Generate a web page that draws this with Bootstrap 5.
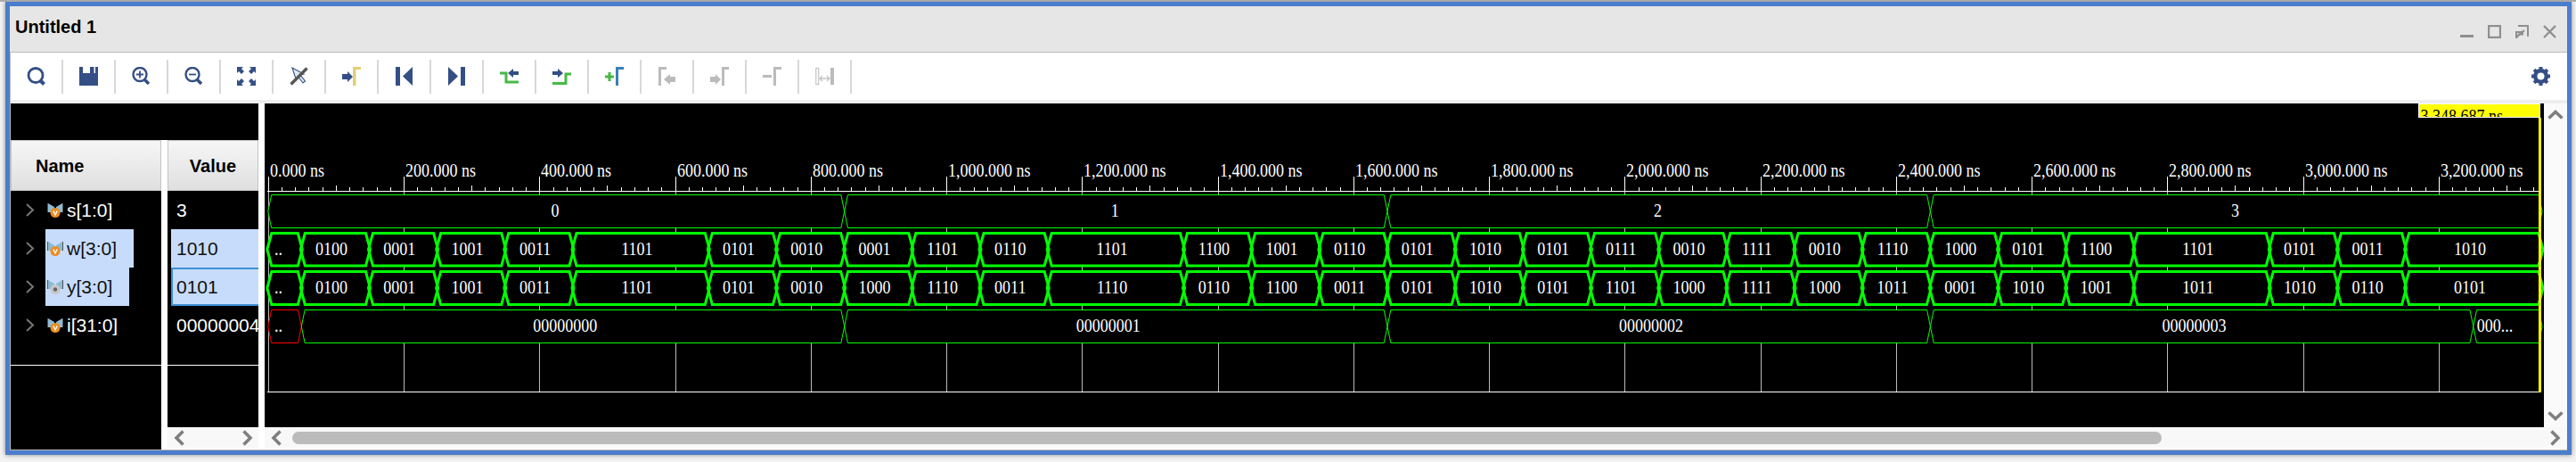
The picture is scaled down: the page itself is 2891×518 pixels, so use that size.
<!DOCTYPE html>
<html lang="en">
<head>
    <meta charset="UTF-8">
    <title>Untitled 1</title>
    <link href="https://cdn.jsdelivr.net/npm/bootstrap@5.3.0/dist/css/bootstrap.min.css" rel="stylesheet">
    <style>
        html, body {
            height: 518px;
            overflow: hidden;
        }
        body {
            background-color: #f2f2f2;
            border-top: 2px solid #a9a9a9;
            font-family: "Liberation Sans", Arial, sans-serif;
            color: #000;
        }
        .win-frame {
            height: 508px;
            margin: 0 5px 0 6px;
            border: 5px solid #4a7dcc;
            background-color: #fff;
            box-shadow: 0 0 5px rgba(0, 0, 0, .45);
        }
        .win-inner {
            height: 498px;
            border-left: 1px solid #bbb;
        }
        .win-title {
            height: 52px;
            background-color: #e6e6e6;
            border-bottom: 1px solid #bbb;
            padding: 0 12px 0 6px;
            margin-left: -1px;
        }
        .win-title-text {
            font-size: 20px;
            font-weight: 700;
            margin-bottom: 5px;
        }
        .win-ctrls {
            gap: 16px;
            margin-top: 6px;
        }
        .tool-bar {
            height: 53px;
        }
        .tool-btn {
            width: 59px;
            height: 38px;
            padding: 0;
            border: 0;
            border-right: 2px solid #d8d8d8;
            border-radius: 0;
        }
        .tool-gear {
            margin-right: 19px;
        }
        .tool-gutter {
            height: 4px;
            background-color: #eee;
        }
        .main-area {
            height: 389px;
            gap: 7px;
            border-bottom: 1px solid #bbb;
        }
        .left-pane {
            width: 278px;
        }
        .left-top {
            height: 41px;
            background-color: #000;
        }
        .left-cols {
            height: 347px;
            gap: 7px;
        }
        .name-col {
            width: 169px;
            background-color: #000;
        }
        .value-col {
            width: 102px;
        }
        .value-body {
            height: 265px;
            background-color: #000;
            overflow: hidden;
        }
        .col-head {
            height: 57px;
            border: 1px solid #c4c4c4;
            background: linear-gradient(#f6f6f6, #dfdfdf);
            font-size: 20px;
            font-weight: 700;
        }
        .name-head {
            padding-left: 27px;
        }
        .sig-row {
            height: 43px;
            font-size: 21px;
            color: #fff;
            white-space: nowrap;
        }
        .sig-chev {
            margin: 0 12px 0 17px;
        }
        .sig-pick {
            height: 100%;
            padding: 0 19px 0 2px;
            gap: 4px;
        }
        .sig-sel {
            background-color: #c7dcfb;
            color: #111;
        }
        .val-cell {
            height: 100%;
            width: 100%;
            padding-left: 10px;
        }
        .val-sel {
            margin-left: 4px;
            padding-left: 6px;
            background-color: #c7dcfb;
            color: #111;
        }
        .val-focus {
            border: 2px solid #3d8fd1;
            padding-left: 4px;
        }
        .sig-end {
            height: 24px;
            border-bottom: 1px solid #fff;
        }
        .scroll-x {
            height: 23px;
            background-color: #f8f8f8;
        }
        .value-scroll {
            padding: 0 6px 0 7px;
        }
        .wave-pane {
            width: 2584px;
        }
        .wave-top {
            height: 363px;
        }
        .wave-canvas {
            display: block;
            width: 2558px;
            height: 363px;
            background-color: #000;
        }
        .wave-canvas text {
            font-family: "Liberation Serif", "Times New Roman", serif;
            font-size: 20px;
            fill: #fff;
        }
        .wave-canvas .cursor-text {
            fill: #000;
        }
        .scroll-y {
            width: 25px;
            padding: 7px 0;
            background-color: #fafafa;
        }
        .wave-scroll {
            padding: 0 7px;
        }
        .scroll-thumb {
            width: 2098px;
            height: 14px;
            margin-left: 12px;
            border-radius: 7px;
            background-color: #bbb;
        }
    </style>
</head>
<body>
    <svg class="d-none">
        <symbol id="sym-medal" viewBox="0 0 18 16">
            <path d="M0 0h1l7 4v5L5 10H0z" fill="#8dbbd6"/>
            <path d="M18 0h-1l-7 4v5l3 1h5z" fill="#8dbbd6"/>
            <path d="M.5 0v10M17.5 0v10" stroke="#555" fill="none"/>
            <circle cx="9" cy="10.5" r="5.5" fill="#ef8b1e"/>
            <path d="M6.8 8.4 9 13l2.2-4.6" stroke="#fff" stroke-width="1.3" fill="none"/>
        </symbol>
        <symbol id="sym-medal-grey" viewBox="0 0 18 16">
            <path d="M0 0h1l7 4v5L5 10H0z" fill="#8dbbd6"/>
            <path d="M18 0h-1l-7 4v5l3 1h5z" fill="#8dbbd6"/>
            <path d="M.5 0v10M17.5 0v10" stroke="#555" fill="none"/>
            <circle cx="9" cy="10.5" r="5.5" fill="#c8c8c8"/>
            <circle cx="9" cy="10.5" r="2.2" fill="#666"/>
        </symbol>
        <symbol id="sym-chev" viewBox="0 0 10 15">
            <path d="M1 1l7 6.5L1 14" stroke="#777" stroke-width="2" fill="none"/>
        </symbol>
        <symbol id="sym-arrow-l" viewBox="0 0 12 18">
            <path d="M10.5 1.5 3 9l7.5 7.5" stroke="#7f7f7f" stroke-width="3.6" fill="none"/>
        </symbol>
        <symbol id="sym-arrow-r" viewBox="0 0 12 18">
            <path d="M1.5 1.5 9 9l-7.5 7.5" stroke="#7f7f7f" stroke-width="3.6" fill="none"/>
        </symbol>
        <symbol id="sym-arrow-u" viewBox="0 0 18 11">
            <path d="M1.5 9.5 9 2.5l7.5 7" stroke="#7f7f7f" stroke-width="3.6" fill="none"/>
        </symbol>
        <symbol id="sym-arrow-d" viewBox="0 0 18 11">
            <path d="M1.5 1.5 9 8.5l7.5-7" stroke="#7f7f7f" stroke-width="3.6" fill="none"/>
        </symbol>
    </svg>

    <div class="win-frame">
        <div class="win-inner d-flex flex-column">
            <!-- barra de titulo -->
            <div class="win-title d-flex align-items-center justify-content-between">
                <span class="win-title-text">Untitled 1</span>
                <div class="win-ctrls d-flex">
                    <svg width="15" height="15" viewBox="0 0 15 15"><path d="M0 12.500h15" stroke="#8f8f8f" stroke-width="3"/></svg>
                    <svg width="15" height="15" viewBox="0 0 15 15"><rect x="1" y="1" width="13" height="13" fill="none" stroke="#8f8f8f" stroke-width="2.400"/></svg>
                    <svg width="15" height="15" viewBox="0 0 15 15"><path d="M3 1h11v12M1 15V8h7v2.500H5.500L10 6" fill="none" stroke="#8f8f8f" stroke-width="2"/><path d="M1 14 8 7" stroke="#8f8f8f" stroke-width="2.400"/></svg>
                    <svg width="15" height="15" viewBox="0 0 15 15"><path d="M1 1l13 13M14 1 1 14" stroke="#8f8f8f" stroke-width="2.400"/></svg>
                </div>
            </div>

            <!-- barra de ferramentas -->
            <div class="tool-bar d-flex align-items-center">
                <button class="btn tool-btn d-flex align-items-center justify-content-center">
                    <svg width="21" height="21" viewBox="0 0 21 21"><circle cx="10" cy="9.500" r="8" fill="none" stroke="#344f85" stroke-width="2.800"/><path d="M15.500 15.500l4 4" stroke="#344f85" stroke-width="4"/></svg>
                </button>
                <button class="btn tool-btn d-flex align-items-center justify-content-center">
                    <svg width="21" height="21" viewBox="0 0 21 21"><path d="M0 0h21v21H0z" fill="#344f85"/><path d="M4 0h8v7H4zM16.500 0h1.500v7h-1.500z" fill="#fff"/></svg>
                </button>
                <button class="btn tool-btn d-flex align-items-center justify-content-center">
                    <svg width="21" height="21" viewBox="0 0 21 21"><circle cx="9" cy="8.500" r="7.500" fill="none" stroke="#344f85" stroke-width="2.400"/><path d="M9 4.500v8M5 8.500h8" stroke="#344f85" stroke-width="1.800"/><path d="M14.500 14.500l4.500 4.500" stroke="#344f85" stroke-width="3.600"/></svg>
                </button>
                <button class="btn tool-btn d-flex align-items-center justify-content-center">
                    <svg width="21" height="21" viewBox="0 0 21 21"><circle cx="9" cy="8.500" r="7.500" fill="none" stroke="#344f85" stroke-width="2.400"/><path d="M5 8.500h8" stroke="#344f85" stroke-width="1.800"/><path d="M14.500 14.500l4.500 4.500" stroke="#344f85" stroke-width="3.600"/></svg>
                </button>
                <button class="btn tool-btn d-flex align-items-center justify-content-center">
                    <svg width="21" height="21" viewBox="0 0 21 21"><path d="M0 0h7L5 2l3 3-3 3-3-3-2 2zM21 0v7l-2-2-3 3-3-3 3-3-2-2zM0 21v-7l2 2 3-3 3 3-3 3 2 2zM21 21h-7l2-2-3-3 3-3 3 3 2-2z" fill="#344f85"/></svg>
                </button>
                <button class="btn tool-btn d-flex align-items-center justify-content-center">
                    <svg width="21" height="21" viewBox="0 0 21 21"><path d="M3 1l4.500 14 2-4 5.500 7 2.500-2-5.500-7 4-1z" fill="#dfe8f5" stroke="#344f85" stroke-width="1.100"/><path d="M1.500 19.500 19.500 1.500" stroke="#555" stroke-width="3.400"/></svg>
                </button>
                <button class="btn tool-btn d-flex align-items-center justify-content-center">
                    <svg width="21" height="21" viewBox="0 0 21 21"><path d="M0 8h6V5l6 6-6 6v-3H0z" fill="#344f85"/><path d="M12 21V0h9v3h-5.500v18z" fill="#e3cf74"/></svg>
                </button>
                <button class="btn tool-btn d-flex align-items-center justify-content-center">
                    <svg width="21" height="21" viewBox="0 0 21 21"><path d="M1 0h5v21H1zM9 10.500 20 0v21z" fill="#344f85"/></svg>
                </button>
                <button class="btn tool-btn d-flex align-items-center justify-content-center">
                    <svg width="21" height="21" viewBox="0 0 21 21"><path d="M1 0v21l11-10.500zM15 0h5v21h-5z" fill="#344f85"/></svg>
                </button>
                <button class="btn tool-btn d-flex align-items-center justify-content-center">
                    <svg width="21" height="21" viewBox="0 0 21 21"><path d="M0 7h7v10h14" fill="none" stroke="#46b946" stroke-width="3"/><path d="M9 7l6-5v3h6v4h-6v3z" fill="#344f85"/></svg>
                </button>
                <button class="btn tool-btn d-flex align-items-center justify-content-center">
                    <svg width="21" height="21" viewBox="0 0 21 21"><path d="M0 18.500h15V8h6" fill="none" stroke="#46b946" stroke-width="3"/><path d="M0 5h6V2l6 5-6 5V9H0z" fill="#344f85"/></svg>
                </button>
                <button class="btn tool-btn d-flex align-items-center justify-content-center">
                    <svg width="21" height="21" viewBox="0 0 21 21"><path d="M0 11h10M5 6v10" stroke="#46b946" stroke-width="3"/><path d="M12 21V0h9v3h-6v18z" fill="#3980b5"/></svg>
                </button>
                <button class="btn tool-btn d-flex align-items-center justify-content-center">
                    <svg width="21" height="21" viewBox="0 0 21 21"><path d="M1 21V0h9v3H4v18zM7 14l7-6v3h6v6h-6v3z" fill="#bbb"/></svg>
                </button>
                <button class="btn tool-btn d-flex align-items-center justify-content-center">
                    <svg width="21" height="21" viewBox="0 0 21 21"><path d="M0 11h6V8l6 6-6 6v-3H0zM13 21V0h8v3h-5v18z" fill="#bbb"/></svg>
                </button>
                <button class="btn tool-btn d-flex align-items-center justify-content-center">
                    <svg width="21" height="21" viewBox="0 0 21 21"><path d="M0 9h10v3H0zM12 21V0h9v3h-6v18z" fill="#bbb"/></svg>
                </button>
                <button class="btn tool-btn d-flex align-items-center justify-content-center">
                    <svg width="21" height="21" viewBox="0 0 21 21"><rect x=".75" y="1.500" width="3" height="18" fill="#fff" stroke="#c4c4c4" stroke-width="1.200"/><path d="M17 1h4v19h-4z" fill="#bbb"/><path d="M5 13h11M8 10l-3 3 3 3M13 10l3 3-3 3" fill="none" stroke="#c4c4c4" stroke-width="1.300"/></svg>
                </button>
                <div class="tool-gear ms-auto d-flex">
                    <svg width="21" height="21" viewBox="0 0 21 21"><circle cx="10.500" cy="10.500" r="6.400" fill="none" stroke="#344f85" stroke-width="4.200"/><path d="M10.500 0v21M0 10.500h21M3.100 3.100l14.800 14.800M17.900 3.100 3.100 17.900" stroke="#344f85" stroke-width="4"/><circle cx="10.500" cy="10.500" r="4" fill="#fff"/></svg>
                </div>
            </div>
            <div class="tool-gutter"></div>

            <div class="main-area d-flex">
                <!-- nomes e valores dos sinais -->
                <div class="left-pane">
                    <div class="left-top"></div>
                    <div class="left-cols d-flex">
                        <div class="name-col">
                            <div class="col-head name-head d-flex align-items-center">Name</div>
                            <div id="listaNomes"></div>
                            <div class="sig-end"></div>
                        </div>
                        <div class="value-col">
                            <div class="col-head d-flex align-items-center justify-content-center">Value</div>
                            <div class="value-body">
                                <div id="listaValores"></div>
                                <div class="sig-end"></div>
                            </div>
                            <div class="scroll-x value-scroll d-flex align-items-center justify-content-between">
                                <svg width="12" height="18"><use href="#sym-arrow-l"/></svg>
                                <svg width="12" height="18"><use href="#sym-arrow-r"/></svg>
                            </div>
                        </div>
                    </div>
                </div>

                <!-- formas de onda -->
                <div class="wave-pane">
                    <div class="wave-top d-flex">
                        <svg id="ondas" class="wave-canvas" viewBox="297 116 2558 363"></svg>
                        <div class="scroll-y d-flex flex-column align-items-center justify-content-between">
                            <svg width="18" height="11"><use href="#sym-arrow-u"/></svg>
                            <svg width="18" height="11"><use href="#sym-arrow-d"/></svg>
                        </div>
                    </div>
                    <div class="scroll-x wave-scroll d-flex align-items-center">
                        <svg width="12" height="18"><use href="#sym-arrow-l"/></svg>
                        <div class="scroll-thumb"></div>
                        <svg class="ms-auto" width="12" height="18"><use href="#sym-arrow-r"/></svg>
                    </div>
                </div>
            </div>
        </div>
    </div>

    <script src="https://cdn.jsdelivr.net/npm/bootstrap@5.3.0/dist/js/bootstrap.bundle.min.js"></script>
    <script>
        const sinais = [
            { nome: "s[1:0]", valor: "3", icone: "sym-medal" },
            { nome: "w[3:0]", valor: "1010", icone: "sym-medal", sel: true },
            { nome: "y[3:0]", valor: "0101", icone: "sym-medal-grey", sel: true, foco: true },
            { nome: "i[31:0]", valor: "00000004", icone: "sym-medal" }
        ];

        const listaNomes = document.getElementById("listaNomes");
        const listaValores = document.getElementById("listaValores");
        sinais.forEach(s => {
            listaNomes.insertAdjacentHTML("beforeend", `
                <div class="sig-row d-flex align-items-center">
                    <svg class="sig-chev" width="10" height="15"><use href="#sym-chev"/></svg>
                    <div class="sig-pick d-flex align-items-center ${s.sel ? "sig-sel" : ""}">
                        <svg width="18" height="16"><use href="#${s.icone}"/></svg>
                        <span>${s.nome}</span>
                    </div>
                </div>`);
            const cls = (s.sel ? "val-sel " : "") + (s.foco ? "val-focus" : "");
            listaValores.insertAdjacentHTML("beforeend", `
                <div class="sig-row"><div class="val-cell d-flex align-items-center ${cls}">${s.valor}</div></div>`);
        });

        const svg = document.getElementById("ondas");
        const X0 = 300.8, PASSO = 152.25, FIM = 2853;
        const VERDE = "#00ff00";
        const tracos = [];

        function add(tag, attrs, txt) {
            const el = document.createElementNS("http://www.w3.org/2000/svg", tag);
            Object.keys(attrs).forEach(k => el.setAttribute(k, attrs[k]));
            if (txt) el.textContent = txt;
            svg.appendChild(el);
            return el;
        }

        function linha(x1, y1, x2, y2, cor) {
            add("line", { x1, y1, x2, y2, stroke: cor, "stroke-width": 1 });
        }

        function texto(str, x, y, meio, cls) {
            const attrs = { transform: `translate(${x} ${y}) scale(.9 1)` };
            if (meio) attrs["text-anchor"] = "middle";
            if (cls) attrs.class = cls;
            return add("text", attrs, str);
        }

        // regua de tempo
        for (let n = 0; n <= 16; n++) {
            const x = Math.round(X0 + n * PASSO) + 0.5;
            linha(x, 214, x, 439, "#bbb");
            linha(x, 198, x, 214, "#fff");
            const ns = (n * 200).toLocaleString("en-US") + ".000 ns";
            texto(ns, x + 1.5, 198);
        }
        for (let m = 1; m <= 167; m++) {
            if (m % 10 === 0) continue;
            const x = Math.round(X0 + m * PASSO / 10) + 0.5;
            linha(x, m % 5 === 0 ? 208 : 210, x, 214, "#fff");
        }
        linha(300, 214.5, 2852, 214.5, "#fff");
        linha(300, 439.5, 2852, 439.5, "#fff");

        function borda(k) {
            return 338.3 + 76.17 * k;
        }

        // o fundo preto sai primeiro, o traco fica guardado para o X das transicoes aparecer inteiro
        // nos traços grossos as pontas passam um pouco do centro, assim as diagonais se cruzam
        function hexagono(c0, c1, yt, yb, cor, esp) {
            const ym = (yt + yb) / 2;
            const dx = esp > 1 ? 4 : 3.8;
            const ponta = esp > 1 ? 1 : 0;
            const pts = [[c0 - ponta, ym], [c0 + dx, yt], [c1 - dx, yt], [c1 + ponta, ym], [c1 - dx, yb], [c0 + dx, yb]];
            const points = pts.map(p => p.join(",")).join(" ");
            add("polygon", { points, fill: "#000" });
            tracos.push({ points, fill: "none", stroke: cor, "stroke-width": esp, "stroke-miterlimit": 10 });
        }

        // barramento: lista de valores por passo, valores iguais em sequencia viram um segmento so
        function barramento(valores, yt, yb, base, esp, passos, corIni) {
            hexagono(X0, borda(0), yt, yb, corIni || VERDE, esp);
            texto("..", 312.5, base, true);
            const partes = valores.split(" ");
            let ini = 0;
            partes.forEach((v, i) => {
                if (partes[i + 1] === v) return;
                const c0 = borda(ini * passos);
                const c1 = i === partes.length - 1 ? FIM : borda((i + 1) * passos);
                hexagono(c0, c1, yt, yb, VERDE, esp);
                const larg = v.length * 9;
                const cx = v === "000..." ? 2800 : (c0 + c1) / 2 - 0.12 * larg;
                texto(v, cx, base, true);
                ini = i + 1;
            });
        }

        // s nao tem o segmento ".." inicial
        [["0", 0, 8], ["1", 8, 16], ["2", 16, 24], ["3", 24, null]].forEach(([v, a, b]) => {
            const c0 = a === 0 ? X0 : borda(a);
            const c1 = b === null ? FIM : borda(b);
            hexagono(c0, c1, 218.5, 255.5, VERDE, 1);
            texto(v, (c0 + c1) / 2 - 1.2, 243, true);
        });

        barramento("0100 0001 1001 0011 1101 1101 0101 0010 0001 1101 0110 1101 1101 1100 1001 0110 0101 1010 0101 0111 0010 1111 0010 1110 1000 0101 1100 1101 1101 0101 0011 1010", 261.5, 298, 286, 3, 1);
        barramento("0100 0001 1001 0011 1101 1101 0101 0010 1000 1110 0011 1110 1110 0110 1100 0011 0101 1010 0101 1101 1000 1111 1000 1011 0001 1010 1001 1011 1011 1010 0110 0101", 304.5, 341.5, 329, 3, 1);
        barramento("00000000 00000001 00000002 00000003 000...", 347.5, 384.5, 372, 1, 8, "#ff0000");

        tracos.forEach(t => add("polygon", t));

        // cursor amarelo
        add("rect", { x: 2714.5, y: 116.5, width: 136, height: 15, fill: "#ffff00", stroke: "#fff", "stroke-width": 1 });
        const clip = add("clipPath", { id: "corteCursor" });
        clip.appendChild(document.createElementNS("http://www.w3.org/2000/svg", "rect"));
        Object.entries({ x: 2715, y: 117, width: 135, height: 14 }).forEach(([k, v]) => clip.firstChild.setAttribute(k, v));
        const grupo = add("g", { "clip-path": "url(#corteCursor)" });
        grupo.appendChild(texto("3,348.687 ns", 2716.5, 136.5, false, "cursor-text"));
        add("rect", { x: 2849, y: 132, width: 3, height: 308, fill: "#ffff00" });
    </script>
</body>
</html>
